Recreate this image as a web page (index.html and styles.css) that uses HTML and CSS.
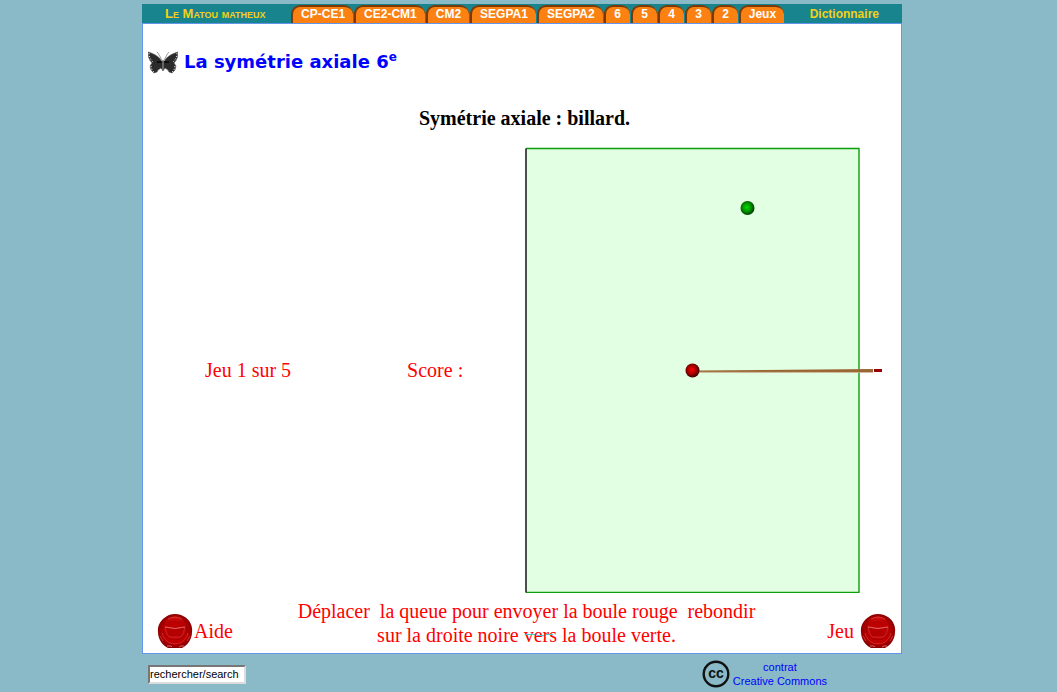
FILE: index.html
```html
<!DOCTYPE html>
<html lang="fr">
<head>
<meta charset="utf-8">
<title>La symétrie axiale 6e</title>
<link rel="stylesheet" href="styles.css">
</head>
<body>
<div class="page">
  <nav class="menu">
    <a class="menu-link brand" href="#">Le Matou matheux</a>
    <div class="tabs">
      <a class="tab" href="#">CP-CE1</a>
      <a class="tab" href="#">CE2-CM1</a>
      <a class="tab" href="#">CM2</a>
      <a class="tab" href="#">SEGPA1</a>
      <a class="tab" href="#">SEGPA2</a>
      <a class="tab" href="#">6</a>
      <a class="tab" href="#">5</a>
      <a class="tab" href="#">4</a>
      <a class="tab" href="#">3</a>
      <a class="tab" href="#">2</a>
      <a class="tab" href="#">Jeux</a>
    </div>
    <a class="menu-link" href="#">Dictionnaire</a>
  </nav>

  <main class="content">
    <h1 class="title">
      <svg class="butterfly" viewBox="0 0 30 23" aria-hidden="true">
        <path d="M14 9 10 2 9 1M16 9l4-7 1-1" fill="none" stroke="#888" stroke-width="0.8"/>
        <path d="M14 11C12 6 7 3 0 1c0 4 1 8 4 11l-2 3 1 4 3 3 3-1 1-2 3-2 2 3 2-3 3 2 1 2 3 1 3-3 1-4-2-3c3-3 4-7 4-11-7 2-12 5-14 10z" fill="#2b2b2b" stroke="#555" stroke-width="0.6"/>
        <path d="M1 2c0 4 2 7 4 9M29 2c0 4-2 7-4 9M3 15l1 4 2 2M27 15l-1 4-2 2" fill="none" stroke="#ddd" stroke-width="1" stroke-dasharray="1.2 1.6"/>
        <path d="M9 11h12" stroke="#000" stroke-width="1.4"/>
        <path d="M15 9v10" stroke="#777" stroke-width="1.6"/>
      </svg>
      <a class="title-link" href="#">La symétrie axiale 6<sup class="title-sup">e</sup></a>
    </h1>

    <h2 class="subtitle">Symétrie axiale : billard.</h2>

    <section class="game">
      <p class="round">Jeu 1 sur 5</p>
      <p class="score">Score :</p>
      <svg class="board" viewBox="0 0 358 446" role="img" aria-label="Table de billard">
        <defs>
          <radialGradient id="green-ball" cx="0.45" cy="0.45" r="0.6"><stop offset="0" stop-color="#0d0"/><stop offset="0.5" stop-color="#009400"/><stop offset="1" stop-color="#002800"/></radialGradient>
          <radialGradient id="red-ball" cx="0.45" cy="0.45" r="0.6"><stop offset="0" stop-color="#f00"/><stop offset="0.5" stop-color="#a80000"/><stop offset="1" stop-color="#280000"/></radialGradient>
        </defs>
        <rect x="1" y="1.5" width="333" height="444" fill="#e3ffe3"/>
        <path d="M1 1.5h333v444H1" fill="none" stroke="#0a9f0a" stroke-width="1.4"/>
        <path d="M1 1.5v444" stroke="#222" stroke-width="1.6"/>
        <circle cx="222.500" cy="61" r="7" fill="url(#green-ball)"/>
        <path d="M174 223.500 348 222v3L174 225.200z" fill="#996633"/>
        <path d="M174 225.200 348 225.500" stroke="#c8a888" stroke-width="0.8"/>
        <path d="M349 223.500h8" stroke="#900" stroke-width="3"/>
        <circle cx="167.500" cy="223.500" r="7" fill="url(#red-ball)"/>
      </svg>
    </section>

    <section class="controls">
      <button class="control" type="button">
        <svg class="knob" viewBox="0 0 36 34" aria-hidden="true">
          <defs>
            <linearGradient id="knob-face" x1="0" y1="0" x2="0" y2="1"><stop offset="0" stop-color="#d81818"/><stop offset="0.25" stop-color="#b80000"/><stop offset="1" stop-color="#d00000"/></linearGradient>
            <radialGradient id="knob-rim"><stop offset="0.6" stop-color="#c80000"/><stop offset="1" stop-color="#8c0000"/></radialGradient>
          </defs>
          <g id="knob-drawing">
            <path d="M12 1Q18-1 24 1C32 4 36 11 35 18c0 7-4 13-10 16H11C5 31 1 25 1 18 0 11 5 4 12 1z" fill="url(#knob-rim)"/>
            <path d="M5 19c1 5 4 8 8 10 4 1 6 1 10 0 4-2 7-5 8-10" fill="none" stroke="#dc2424"/>
            <circle cx="18" cy="14" r="12" fill="url(#knob-face)" stroke="#960000"/>
            <path d="M8 13q10 3 20 0-1 6-4 10H12Q9 19 8 13z" fill="#b40000" stroke="#c83030" stroke-width="0.8"/>
            <path d="M8 13q10 3 20 0" fill="none" stroke="#e06060"/>
            <path d="M11 5q7-4 14 0M3 22l3 5M33 22l-3 5" fill="none" stroke="#dc3c3c" stroke-width="0.8"/>
            <path d="M10 32h4l1 1M22 33l2-1h3" fill="none" stroke="#e88080" stroke-width="0.8"/>
          </g>
        </svg>
        Aide
      </button>
      <p class="instructions">Déplacer&nbsp; la queue pour envoyer la boule rouge&nbsp; rebondir<br>sur la droite noire <span class="marked">vers<svg class="mark" viewBox="0 0 27 4" aria-hidden="true"><path d="M0 1.500h9M11 2.500h7M20 1.500h7" stroke="#4cc" stroke-width="1"/></svg></span> la boule verte.</p>
      <button class="control control-end" type="button">
        Jeu
        <svg class="knob" viewBox="0 0 36 34" aria-hidden="true"><use href="#knob-drawing"/></svg>
      </button>
    </section>
  </main>

  <footer class="footer">
    <input class="search" type="text" value="rechercher/search" aria-label="rechercher/search">
    <a class="licence" href="#">
      <svg class="cc" viewBox="0 0 28 28" aria-hidden="true">
        <circle cx="14" cy="14" r="12.300" fill="none" stroke="#111" stroke-width="2.4"/>
        <text class="cc-text" x="14" y="18" text-anchor="middle">cc</text>
      </svg>
      <span class="licence-text">contrat<br>Creative Commons</span>
    </a>
  </footer>
</div>
</body>
</html>
```
FILE: styles.css
```css
* { box-sizing: border-box; }

body {
  margin: 0;
  padding: 4px 13px 0 0;
  background: #8abac8;
  font-family: "Liberation Sans", Arial, sans-serif;
}

.page {
  max-width: 760px;
  margin: 0 auto;
}

.menu {
  display: flex;
  justify-content: space-between;
  height: 19px;
  padding: 0 23px;
  background: #18858e;
  font-size: 12px;
  font-weight: bold;
  line-height: 20px;
}

.menu-link {
  color: #f5d016;
  text-decoration: none;
  white-space: nowrap;
}

.brand {
  font-size: 13px;
  font-variant: small-caps;
}

.tabs {
  display: flex;
  gap: 1px;
  padding-top: 1px;
}

.tab {
  min-width: 26px;
  padding: 0 8px;
  border-top: 2px solid #7a3a08;
  border-left: 2px solid #7a3a08;
  border-radius: 9px 9px 0 0;
  background: #fb8112;
  color: #fff;
  line-height: 15px;
  text-align: center;
  text-decoration: none;
}

.content {
  border: 1px solid #6495ed;
  background: #fff;
  font-family: "Liberation Serif", "Times New Roman", serif;
  font-size: 20px;
  line-height: 24px;
}

.title {
  display: flex;
  align-items: center;
  gap: 6px;
  margin: 0;
  padding: 26px 5px 0;
  font-family: "DejaVu Sans", Verdana, sans-serif;
  font-size: 18px;
  line-height: 24px;
}

.butterfly {
  width: 30px;
  height: 23px;
}

.title-link {
  color: #00f;
  text-decoration: none;
}

.title-sup {
  font-size: 12px;
  line-height: 0;
}

.subtitle {
  margin: 32px 0 17px;
  padding-left: 5px;
  font-size: 20px;
  line-height: 24px;
  text-align: center;
}

.game {
  display: flex;
  align-items: center;
  padding: 0 18px 0 62px;
  color: #f00;
}

.round,
.score {
  margin: 0;
}

.score {
  margin-left: 116px;
}

.board {
  width: 358px;
  height: 446px;
  margin-left: auto;
}

.controls {
  display: grid;
  grid-template-columns: 1fr auto 1fr;
  align-items: end;
  padding: 6px 5px 5px 14px;
  color: #f00;
}

.instructions {
  margin: 0;
  padding-bottom: 1px;
  text-align: center;
}

.marked {
  position: relative;
}

.mark {
  position: absolute;
  top: 9px;
  left: 2px;
  width: 27px;
  height: 4px;
}

.control {
  display: flex;
  align-items: center;
  justify-self: start;
  gap: 1px;
  padding: 0;
  border: 0;
  background: none;
  color: inherit;
  font: inherit;
}

.control-end {
  justify-self: end;
  gap: 6px;
}

.knob {
  width: 36px;
  height: 34px;
}

.footer {
  display: flex;
  justify-content: space-between;
  align-items: center;
  padding: 6px 75px 0 6px;
  font-size: 11px;
}

.search {
  width: 98px;
  height: 19px;
  padding: 0;
  border: 2px solid;
  border-color: #777 #ddd #ddd #777;
  background: #fff;
  color: #000;
  font: inherit;
}

.licence {
  display: flex;
  align-items: center;
  gap: 3px;
  color: #00f;
  line-height: 14px;
  text-align: center;
  text-decoration: none;
}

.cc {
  width: 28px;
  height: 28px;
}

.cc-text {
  fill: #111;
  font-family: "Liberation Sans", Arial, sans-serif;
  font-size: 14px;
  font-weight: bold;
}
```
